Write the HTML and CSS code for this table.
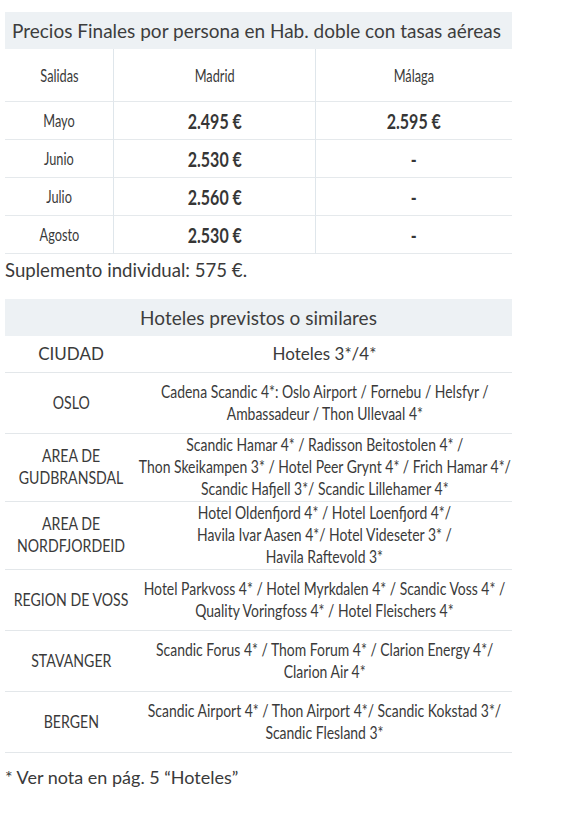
FILE: index.html
```html
<!DOCTYPE html>
<html lang="es">
<head>
<meta charset="utf-8">
<title>Precios y hoteles</title>
<link rel="stylesheet" href="styles.css">
</head>
<body>
<div class="page">
  <section class="prices">
    <h2 class="band band-left">Precios Finales por persona en Hab. doble con tasas aéreas</h2>
    <div class="ptable">
      <div class="pc head"><span class="c">Salidas</span></div>
      <div class="pc head"><span class="c">Madrid</span></div>
      <div class="pc head last"><span class="c">Málaga</span></div>

      <div class="pc"><span class="c">Mayo</span></div>
      <div class="pc"><span class="c b">2.495 €</span></div>
      <div class="pc last"><span class="c b">2.595 €</span></div>

      <div class="pc"><span class="c">Junio</span></div>
      <div class="pc"><span class="c b">2.530 €</span></div>
      <div class="pc last"><span class="c b">-</span></div>

      <div class="pc"><span class="c">Julio</span></div>
      <div class="pc"><span class="c b">2.560 €</span></div>
      <div class="pc last"><span class="c b">-</span></div>

      <div class="pc"><span class="c">Agosto</span></div>
      <div class="pc"><span class="c b">2.530 €</span></div>
      <div class="pc last"><span class="c b">-</span></div>
    </div>
    <p class="note note-sup">Suplemento individual: 575 €.</p>
  </section>

  <section class="hotels">
    <h2 class="band band-center">Hoteles previstos o similares</h2>
    <div class="hrow hrow-head">
      <div class="city">CIUDAD</div>
      <div class="list">Hoteles 3*/4*</div>
    </div>
    <div class="hrow">
      <div class="city"><span class="hc">OSLO</span></div>
      <div class="list"><span class="hl">Cadena Scandic 4*: Oslo Airport / Fornebu / Helsfyr /<br>Ambassadeur / Thon Ullevaal 4*</span></div>
    </div>
    <div class="hrow tight">
      <div class="city"><span class="hc">AREA DE<br>GUDBRANSDAL</span></div>
      <div class="list"><span class="hl">Scandic Hamar 4* / Radisson Beitostolen 4* /<br>Thon Skeikampen 3* / Hotel Peer Grynt 4* / Frich Hamar 4*/<br>Scandic Hafjell 3*/ Scandic Lillehamer 4*</span></div>
    </div>
    <div class="hrow tight">
      <div class="city"><span class="hc">AREA DE<br>NORDFJORDEID</span></div>
      <div class="list"><span class="hl">Hotel Oldenfjord 4* / Hotel Loenfjord 4*/<br>Havila Ivar Aasen 4*/ Hotel Videseter 3* /<br>Havila Raftevold 3*</span></div>
    </div>
    <div class="hrow">
      <div class="city"><span class="hc">REGION DE VOSS</span></div>
      <div class="list"><span class="hl">Hotel Parkvoss 4* / Hotel Myrkdalen 4* / Scandic Voss 4* /<br>Quality Voringfoss 4* / Hotel Fleischers 4*</span></div>
    </div>
    <div class="hrow">
      <div class="city"><span class="hc">STAVANGER</span></div>
      <div class="list"><span class="hl">Scandic Forus 4* / Thom Forum 4* / Clarion Energy 4*/<br>Clarion Air 4*</span></div>
    </div>
    <div class="hrow">
      <div class="city"><span class="hc">BERGEN</span></div>
      <div class="list"><span class="hl">Scandic Airport 4* / Thon Airport 4*/ Scandic Kokstad 3*/<br>Scandic Flesland 3*</span></div>
    </div>
    <p class="note note-foot">* Ver nota en pág. 5 “Hoteles”</p>
  </section>
</div>
</body>
</html>
```

FILE: styles.css
```css
html, body {
  margin: 0;
  padding: 0;
  background: #ffffff;
}

body {
  font-family: "Lato", "Open Sans", "DejaVu Sans", sans-serif;
  color: #3a3a3a;
}

.page {
  width: 507px;
  margin: 12px 0 0 5px;
}

.band {
  margin: 0;
  height: 37px;
  background: #edf1f4;
  font-size: 19px;
  font-weight: 400;
  line-height: 37px;
  color: #3d3d3d;
  white-space: nowrap;
}

.band-left {
  padding-left: 7px;
}

.band-center {
  text-align: center;
}

.ptable {
  display: grid;
  grid-template-columns: 109px 202px 196px;
}

.pc {
  height: 37px;
  display: flex;
  align-items: center;
  justify-content: center;
  border-right: 1px solid #dfe6eb;
  border-bottom: 1px solid #e5e9ec;
  font-size: 17px;
}

.pc.head {
  height: 52px;
}

.pc.last {
  border-right: none;
}

.c {
  display: inline-block;
  white-space: nowrap;
  transform: scaleX(0.75);
}

.c.b {
  font-weight: 700;
  font-size: 20px;
  color: #363636;
  transform: scaleX(0.8);
}

.note {
  margin: 0;
  line-height: 24px;
  color: #3a3a3a;
  white-space: nowrap;
}

.note-sup {
  margin-top: 4px;
  font-size: 18.6px;
}

.hotels {
  margin-top: 17px;
}

.hrow {
  display: grid;
  grid-template-columns: 132px 375px;
  min-height: 60px;
  border-bottom: 1px solid #e3e7ea;
  align-items: center;
  font-size: 17px;
  line-height: 22px;
}

.hrow.tight {
  min-height: 0;
  padding: 0 0 1px;
}

.hrow.hrow-head {
  min-height: 36px;
}

.city,
.list {
  display: flex;
  justify-content: center;
  text-align: center;
}

.hc,
.hl {
  display: inline-block;
  white-space: nowrap;
}

.hc {
  transform: scaleX(0.83);
}

.hl {
  transform: scaleX(0.82);
}

.note-foot {
  margin-top: 12px;
  font-size: 18px;
}
```
